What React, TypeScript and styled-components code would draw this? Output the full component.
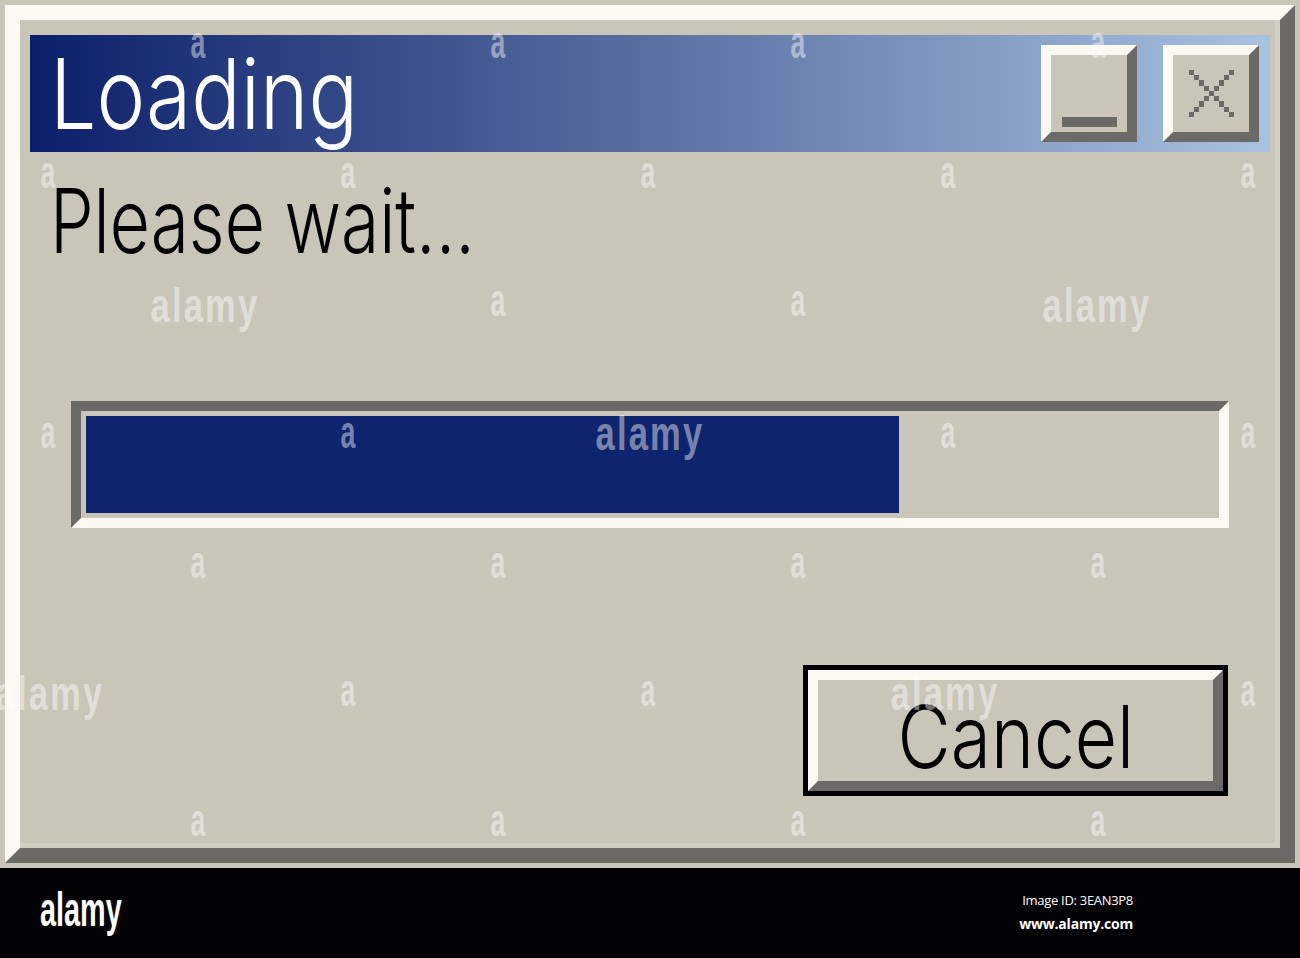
import React from 'react';
import styled, { createGlobalStyle } from 'styled-components';

const face = '#c9c5b9';
const shade = '#6b6a66';
const light = '#fcf9f2';
const navy = '#0f246e';

const GlobalStyle = createGlobalStyle`
  html, body {
    margin: 0;
    padding: 0;
    background: #020204;
  }
  body {
    width: 1300px;
    height: 958px;
    overflow: hidden;
  }
`;

const Page = styled.div`
  width: 1300px;
  height: 958px;
  display: flex;
  flex-direction: column;
  font-family: Inter, "Liberation Sans", Arial, sans-serif;
  font-weight: 300;
`;

const Desk = styled.div`
  position: relative;
  height: 868px;
  box-sizing: border-box;
  padding: 5px;
  background: ${face};
`;

const Frame = styled.div`
  height: 100%;
  box-sizing: border-box;
  border: 15px solid;
  border-color: ${light} ${shade} ${shade} ${light};
  background: ${face};
`;

const Body = styled.div`
  height: 100%;
  box-sizing: border-box;
  padding: 15px 5px 0 10px;
  border-right: 5px solid #d2cec4;
  border-bottom: 5px solid #d2cec4;
  display: flex;
  flex-direction: column;
`;

const TitleBar = styled.div`
  height: 117px;
  flex-shrink: 0;
  display: flex;
  align-items: center;
  gap: 26px;
  padding: 0 11px 0 20px;
  background: linear-gradient(to right, #0c1f6b 0%, #5a70a2 50%, #a8c2e0 100%);
`;

const Squeeze = styled.span<{ $x: number; $origin?: string }>`
  display: inline-block;
  white-space: nowrap;
  transform: scaleX(${p => p.$x});
  transform-origin: ${p => p.$origin || 'left'} center;
`;

const Title = styled.div`
  flex: 1;
  font-size: 98px;
  line-height: 1;
  color: #ffffff;
`;

const WinButton = styled.div`
  width: 96px;
  height: 97px;
  box-sizing: border-box;
  border: 10px solid;
  border-color: ${light} ${shade} ${shade} ${light};
  background: ${face};
  display: flex;
  justify-content: center;
  align-items: center;
`;

const MinimizeButton = styled(WinButton)`
  align-items: flex-end;
  padding-bottom: 5px;
`;

const MinimizeBar = styled.div`
  width: 55px;
  height: 10px;
  background: ${shade};
`;

const Message = styled.div`
  margin-top: 24px;
  padding-left: 20px;
  font-size: 89px;
  line-height: 1;
  color: #000000;
`;

const Track = styled.div`
  margin: 136px 41px 0 41px;
  height: 127px;
  box-sizing: border-box;
  border: 10px solid;
  border-color: ${shade} ${light} ${light} ${shade};
  padding: 5px;
  background: ${face};
`;

const Fill = styled.div`
  height: 100%;
  background: ${navy};
`;

const CancelButton = styled.div`
  align-self: flex-end;
  margin: 137px 42px 0 0;
  width: 425px;
  height: 131px;
  box-sizing: border-box;
  border: 5px solid #000000;
`;

const CancelFace = styled.div`
  height: 100%;
  box-sizing: border-box;
  border: 10px solid;
  border-color: ${light} ${shade} ${shade} ${light};
  background: ${face};
  display: flex;
  justify-content: center;
  align-items: center;
  padding-top: 12px;
  font-size: 87px;
  line-height: 1;
  color: #000000;
`;

/* faint stock marks laid over the window */
const Marks = styled.div`
  position: absolute;
  inset: 0;
  pointer-events: none;
  overflow: hidden;
`;

const Mark = styled.span<{ $x: number; $y: number; $big?: boolean }>`
  position: absolute;
  left: ${p => p.$x}px;
  top: ${p => p.$y}px;
  font-family: "Liberation Sans", Arial, sans-serif;
  font-weight: 700;
  font-size: ${p => (p.$big ? 48 : 46)}px;
  letter-spacing: ${p => (p.$big ? 3 : 0)}px;
  line-height: 1;
  color: rgba(255, 255, 255, 0.45);
  transform: translate(-50%, -50%) scaleX(${p => (p.$big ? 0.72 : 0.58)});
  white-space: nowrap;
`;

const Footer = styled.div`
  height: 90px;
  flex-shrink: 0;
  background: #020204;
  display: flex;
  justify-content: space-between;
  align-items: flex-start;
  padding: 18px 167px 0 40px;
  box-sizing: border-box;
`;

const Logo = styled.div`
  font-family: "Liberation Sans", Arial, sans-serif;
  font-weight: 700;
  font-size: 48px;
  line-height: 1;
  color: #ffffff;
`;

const Credits = styled.div`
  padding-top: 2px;
  text-align: right;
  font-family: "Open Sans", "Noto Sans", sans-serif;
  color: #ffffff;
`;

const CreditLine = styled.div<{ $bold?: boolean }>`
  font-size: ${p => (p.$bold ? 14 : 13)}px;
  font-weight: ${p => (p.$bold ? 700 : 400)};
  line-height: 24px;
  letter-spacing: ${p => (p.$bold ? -0.2 : -0.3)}px;
`;

const CloseGlyph = () => {
  const cells: [number, number][] = [];
  for (let i = 0; i < 9; i++) {
    cells.push([i, i]);
    if (i !== 4) cells.push([8 - i, i]);
  }
  return (
    <svg width="45" height="47" viewBox="0 0 9 9" preserveAspectRatio="none" shapeRendering="crispEdges">
      {cells.map(([x, y]) => (
        <rect key={`${x}-${y}`} x={x} y={y} width="1" height="1" fill={shade} />
      ))}
    </svg>
  );
};

const smallMarks: [number, number][] = [
  [198, 42], [498, 42], [798, 42], [1098, 42],
  [48, 172], [348, 172], [648, 172], [948, 172], [1248, 172],
  [498, 300], [798, 300],
  [48, 432], [348, 432], [948, 432], [1248, 432],
  [198, 562], [498, 562], [798, 562], [1098, 562],
  [348, 690], [648, 690], [1248, 690],
  [198, 820], [498, 820], [798, 820], [1098, 820],
];

const bigMarks: [number, number][] = [
  [205, 306], [1097, 306], [650, 434], [50, 694], [945, 694],
];

const progress = 72.1;

export default function App() {
  return (
    <Page>
      <GlobalStyle />
      <Desk>
        <Frame>
          <Body>
            <TitleBar>
              <Title>
                <Squeeze $x={0.84}>Loading</Squeeze>
              </Title>
              <MinimizeButton>
                <MinimizeBar />
              </MinimizeButton>
              <WinButton>
                <CloseGlyph />
              </WinButton>
            </TitleBar>

            <Message>
              <Squeeze $x={0.78}>Please wait...</Squeeze>
            </Message>

            <Track>
              <Fill style={{ width: `${progress}%` }} />
            </Track>

            <CancelButton>
              <CancelFace>
                <Squeeze $x={0.84} $origin="center">Cancel</Squeeze>
              </CancelFace>
            </CancelButton>
          </Body>
        </Frame>
        <Marks>
          {smallMarks.map(([x, y]) => (
            <Mark key={`a${x}-${y}`} $x={x} $y={y}>a</Mark>
          ))}
          {bigMarks.map(([x, y]) => (
            <Mark key={`b${x}-${y}`} $x={x} $y={y} $big>alamy</Mark>
          ))}
        </Marks>
      </Desk>
      <Footer>
        <Logo>
          <Squeeze $x={0.6}>alamy</Squeeze>
        </Logo>
        <Credits>
          <CreditLine>Image ID: 3EAN3P8</CreditLine>
          <CreditLine $bold>www.alamy.com</CreditLine>
        </Credits>
      </Footer>
    </Page>
  );
}
